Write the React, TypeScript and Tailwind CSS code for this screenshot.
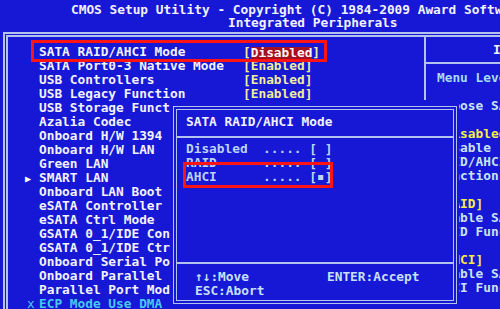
import React from "react";

const rows: { m?: string; label: string; value?: string; hl?: boolean; cyan?: boolean }[] = [
  { label: "SATA RAID/AHCI Mode", value: "Disabled", hl: true },
  { label: "SATA Port0-3 Native Mode", value: "Enabled" },
  { label: "USB Controllers", value: "Enabled" },
  { label: "USB Legacy Function", value: "Enabled" },
  { label: "USB Storage Function", value: "Enabled" },
  { label: "Azalia Codec", value: "Auto" },
  { label: "Onboard H/W 1394", value: "Enabled" },
  { label: "Onboard H/W LAN", value: "Enabled" },
  { label: "Green LAN", value: "Disabled" },
  { m: "tri", label: "SMART LAN", value: "" },
  { label: "Onboard LAN Boot ROM", value: "Disabled" },
  { label: "eSATA Controller", value: "Enabled" },
  { label: "eSATA Ctrl Mode", value: "IDE" },
  { label: "GSATA 0_1/IDE Controller", value: "Enabled" },
  { label: "GSATA 0_1/IDE Ctrl Mode", value: "IDE" },
  { label: "Onboard Serial Port 1", value: "3F8/IRQ4" },
  { label: "Onboard Parallel Port", value: "378/IRQ7" },
  { label: "Parallel Port Mode", value: "SPP" },
  { m: "x", label: "ECP Mode Use DMA", value: "3", cyan: true },
];

const help: { t: string; y?: boolean }[] = [
  { t: "Menu Level  \u25B6" },
  { t: "" },
  { t: "Choose SATA RAID/AHCI Mode" },
  { t: "" },
  { t: "[Disabled]", y: true },
  { t: "Disable" },
  { t: "RAID/AHCI" },
  { t: "Function" },
  { t: "" },
  { t: "[RAID]", y: true },
  { t: "Enable SATA" },
  { t: "RAID Function" },
  { t: "" },
  { t: "[AHCI]", y: true },
  { t: "Enable SATA" },
  { t: "AHCI Function" },
];

export default function App() {
  return (
    <div
      className="relative w-[500px] h-[309px] overflow-hidden bg-[#1717d6] font-bold text-[12.8px] text-[#f2f2ff]"
      style={{ fontFamily: '"DejaVu Sans Mono", "Liberation Mono", monospace' }}
    >
      {/* header */}
      <div className="h-[32px] pt-[3px] leading-[13px] whitespace-nowrap">
        <div className="pl-[71px]">CMOS Setup Utility - Copyright (C) 1984-2009 Award Software</div>
        <div className="pl-[228px]">Integrated Peripherals</div>
      </div>

      {/* frame */}
      <div className="ml-[3px] h-[277px] flex border-t-[5px] border-l-[5px] border-double border-[#b4c2ee]">
        {/* left panel */}
        <div className="w-[416px] shrink-0 pt-[8px] pl-[14px] leading-[14px]">
          {rows.map((r, i) => (
            <div key={i} className="flex h-[14px] whitespace-nowrap">
              <div className="w-[17px] shrink-0">
                {r.m === "tri" && <span className="pl-[3px] text-[10px] text-white">{"\u25B6"}</span>}
                {r.m === "x" && <span className="pl-[5px] text-[#48c8f0] font-normal">x</span>}
              </div>
              <div className={`w-[204px] shrink-0 overflow-hidden ${r.cyan ? "text-[#48c8f0]" : ""}`}>{r.label}</div>
              {r.value !== undefined && r.value !== "" && (
                <div className={r.cyan ? "text-[#48c8f0]" : "text-[#f0ee9a]"}>
                  [
                  {r.hl ? (
                    <span className="inline-block bg-[#a3101e] text-[#fff4f4] leading-[12px] h-[12px] align-middle">{r.value}</span>
                  ) : (
                    r.value
                  )}
                  ]
                </div>
              )}
            </div>
          ))}
        </div>

        {/* right panel */}
        <div className="flex-1 border-l-2 border-[#b4c2ee] whitespace-nowrap">
          <div className="h-[27px] flex items-center pl-[67px] border-b-2 border-[#b4c2ee]">Item Help</div>
          <div className="pl-[11px] pt-[7px] leading-[14px]">
            {help.map((h, i) => (
              <div
                key={i}
                className={`h-[14px] ${i === 0 ? "text-[#a8dcec]" : h.y ? "text-[#f4f040]" : "text-[#c8e4f0]"}`}
              >
                {h.t}
              </div>
            ))}
          </div>
        </div>
      </div>

      {/* popup */}
      <div className="absolute left-[170px] top-[100px] w-[289px] h-[209px] bg-[#1717d6] pl-[3px] pt-[6px]">
        <div className="w-[284px] h-[198px] flex flex-col border-[4px] border-double border-[#b4c2ee] leading-[14px] whitespace-pre">
          <div className="pt-[5px] pl-[9px] h-[19px]">SATA RAID/AHCI Mode</div>
          <div className="mt-[7px] h-[2px] bg-[#b4c2ee]" />
          <div className="pt-[4px] pl-[9px] text-[#bcd4f4]">
            <div className="h-[14px]">{"Disabled  ..... [ ]"}</div>
            <div className="h-[14px]">{"RAID      ..... [ ]"}</div>
            <div className="h-[14px]">{"AHCI      ..... [\u25AA]"}</div>
          </div>
          <div className="flex-1" />
          <div className="h-[2px] bg-[#b4c2ee]" />
          <div className="pt-[6px] pb-[2px] pl-[18px] text-[#c8e0f8]">
            <div className="flex h-[14px]">
              <div className="w-[132px]">{"\u2191\u2193:Move"}</div>
              <div>ENTER:Accept</div>
            </div>
            <div className="h-[14px]">ESC:Abort</div>
          </div>
        </div>
      </div>

      {/* red annotation boxes */}
      <div className="absolute left-[31px] top-[40px] w-[296px] h-[22px] border-[3px] border-[#ff1414]" />
      <div className="absolute left-[183px] top-[162px] w-[150px] h-[26px] border-[3px] border-[#ff1414]" />
    </div>
  );
}
